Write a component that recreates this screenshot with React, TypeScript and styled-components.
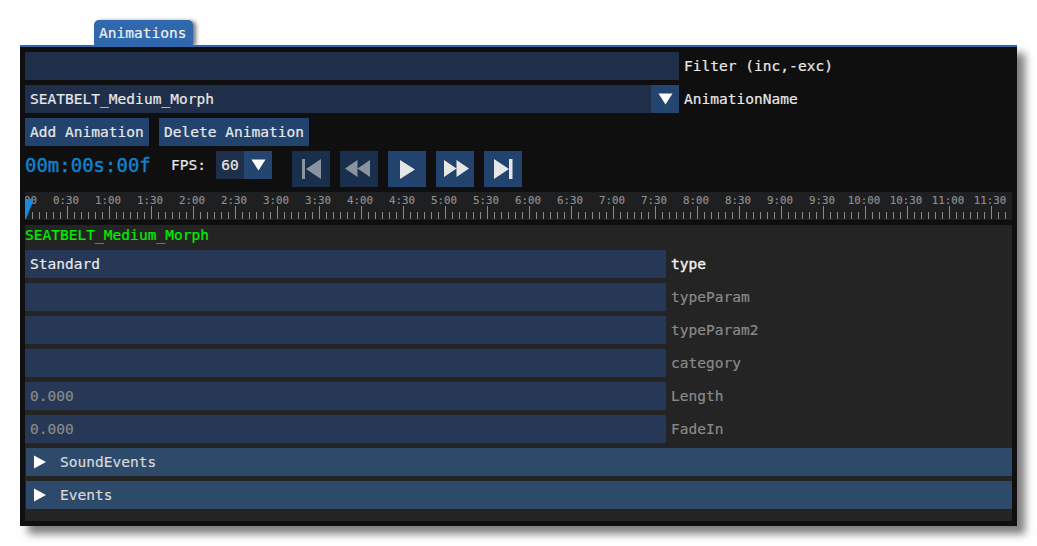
import styled, { createGlobalStyle } from 'styled-components';

const GlobalStyle = createGlobalStyle`
	html, body {
		margin: 0;
		background: #ffffff;
		font-family: "DejaVu Sans Mono", "Liberation Mono", monospace;
		font-size: 14.5px;
		letter-spacing: 0.03px;
		color: #e8e8e8;
		-webkit-text-stroke: 0.2px;
	}
`;

const Page = styled.div`
	width: 1037px;
	height: 546px;
	padding: 20px 0 0 20px;
	box-sizing: border-box;
	overflow: hidden;
`;

const TabBar = styled.div`
	display: flex;
	padding-left: 74px;
`;

const Tab = styled.div`
	width: 99px;
	height: 25px;
	box-sizing: border-box;
	padding: 5px 0 0 5px;
	background: #2f68ad;
	border-radius: 5px 5px 0 0;
	box-shadow: 3px 1px 4px rgba(0, 0, 0, 0.55);
	line-height: 17px;
	color: #f0f0f0;
`;

const Window = styled.div`
	position: relative;
	width: 997px;
	height: 481px;
	box-sizing: border-box;
	border-top: 2px solid #2f68ad;
	padding: 5px;
	background: #0f0f0f;
	box-shadow: 8px 8px 8px rgba(0, 0, 0, 0.5);
	display: flex;
	flex-direction: column;
	gap: 5px;
`;

const Row = styled.div`
	display: flex;
	align-items: center;
	gap: 5px;
	height: 28px;
`;

const Input = styled.div`
	width: 654px;
	height: 28px;
	box-sizing: border-box;
	padding-left: 5px;
	line-height: 28px;
	background: #1f2f4a;
`;

const Select = styled(Input)`
	display: flex;
	justify-content: space-between;
	padding-right: 0;
`;

const ArrowBox = styled.div`
	width: 28px;
	height: 28px;
	display: flex;
	align-items: center;
	justify-content: center;
	background: #23456f;
`;

const Label = styled.span`
	line-height: 28px;
`;

const Buttons = styled(Row)`
	gap: 10px;
`;

const Button = styled.div`
	height: 28px;
	box-sizing: border-box;
	padding: 0 5px;
	line-height: 28px;
	background: #23436f;
`;

const TimeRow = styled.div`
	display: flex;
	align-items: flex-start;
	height: 36px;
`;

const Time = styled.div`
	width: 146px;
	line-height: 28px;
	font-size: 18.95px;
	-webkit-text-stroke: 0.4px;
	color: #0f82d0;
`;

const FpsLabel = styled.div`
	width: 45px;
	line-height: 28px;
`;

const FpsSelect = styled.div`
	display: flex;
	width: 56px;
	height: 28px;
	background: #1f2f4a;
`;

const FpsValue = styled.div`
	width: 28px;
	text-align: center;
	line-height: 28px;
`;

const Transport = styled.div`
	display: flex;
	gap: 10px;
	margin-left: 20px;
`;

const TransportButton = styled.div<{ $disabled?: boolean }>`
	width: 38px;
	height: 36px;
	background: ${(props) => (props.$disabled ? '#1a2f4b' : '#23436f')};

	svg {
		display: block;
		opacity: ${(props) => (props.$disabled ? 0.55 : 1)};
	}
`;

const Timeline = styled.div`
	position: relative;
	height: 28px;
	background: #1e1f20;
	overflow: hidden;
`;

const TimeLabels = styled.div`
	display: flex;
	margin-left: -22px;
	padding-top: 1px;
	font-size: 10.8px;
	line-height: 15px;
	color: #8c8c8c;
`;

const TimeLabel = styled.span`
	flex: 0 0 42px;
	text-align: center;
`;

const Ruler = styled.svg`
	position: absolute;
	left: 0;
	bottom: 0;
`;

const Marker = styled.svg`
	position: absolute;
	left: 0;
	top: 7px;
`;

const Panel = styled.div`
	flex: 1;
	background: #242424;
	display: flex;
	flex-direction: column;
	gap: 5px;
`;

const PanelTitle = styled.div`
	height: 20px;
	line-height: 21px;
	color: #00f000;
`;

const Field = styled.div`
	display: flex;
	align-items: center;
	gap: 5px;
	height: 28px;
`;

const FieldValue = styled.div<{ $dim?: boolean }>`
	width: 641px;
	height: 28px;
	box-sizing: border-box;
	padding-left: 5px;
	line-height: 28px;
	background: #263855;
	color: ${(props) => (props.$dim ? '#8a8a8a' : '#e8e8e8')};
`;

const FieldLabel = styled.span<{ $active?: boolean }>`
	color: ${(props) => (props.$active ? '#f0f0f0' : '#8a8a8a')};
	-webkit-text-stroke: ${(props) => (props.$active ? '0.4px' : '0.2px')};
`;

const Section = styled.div`
	display: flex;
	align-items: center;
	height: 28px;
	margin-left: 1px;
	padding-left: 8px;
	background: #2d4a6b;
	color: #d8d8d8;
`;

const SectionName = styled.span`
	margin-left: 14px;
`;

const DownArrow = () => (
	<svg width="15" height="12" viewBox="0 0 15 12">
		<path d="M0.5 0.5 H14.5 L7.5 11.5 Z" fill="#ffffff" />
	</svg>
);

const RightArrow = () => (
	<svg width="12" height="14" viewBox="0 0 12 14" style={{ flexShrink: 0 }}>
		<path d="M0 0.5 L12 7 L0 13.5 Z" fill="#ffffff" />
	</svg>
);

const icons: { d: string; disabled?: boolean }[] = [
	{ d: 'M10 8 H13 V28 H10 Z M29 8 V28 L14 18 Z', disabled: true },
	{ d: 'M17.5 9 V26 L5 17.5 Z M30 9 V26 L17.5 17.5 Z', disabled: true },
	{ d: 'M12 9 L27 18.5 L12 28 Z' },
	{ d: 'M8 9 L20.5 17.5 L8 26 Z M20.5 9 L33 17.5 L20.5 26 Z' },
	{ d: 'M10 8 L25 18 L10 28 Z M25 8 H28.5 V28 H25 Z' }
];

const timeLabels: string[] = [];
for (let i = 0; i < 24; i++) {
	timeLabels.push(`${Math.floor(i / 2)}:${i % 2 ? '30' : '00'}`);
}

const ticks = Array.from({ length: 141 }, (_, i) => i * 7);

const fields = [
	{ name: 'type', value: 'Standard', active: true },
	{ name: 'typeParam', value: '' },
	{ name: 'typeParam2', value: '' },
	{ name: 'category', value: '' },
	{ name: 'Length', value: '0.000', dim: true },
	{ name: 'FadeIn', value: '0.000', dim: true }
];

const App = () => {
	return (
		<Page>
			<GlobalStyle />
			<TabBar>
				<Tab>Animations</Tab>
			</TabBar>
			<Window>
				<Row>
					<Input />
					<Label>Filter (inc,-exc)</Label>
				</Row>
				<Row>
					<Select>
						SEATBELT_Medium_Morph
						<ArrowBox>
							<DownArrow />
						</ArrowBox>
					</Select>
					<Label>AnimationName</Label>
				</Row>
				<Buttons>
					<Button>Add Animation</Button>
					<Button>Delete Animation</Button>
				</Buttons>
				<TimeRow>
					<Time>00m:00s:00f</Time>
					<FpsLabel>FPS:</FpsLabel>
					<FpsSelect>
						<FpsValue>60</FpsValue>
						<ArrowBox>
							<DownArrow />
						</ArrowBox>
					</FpsSelect>
					<Transport>
						{icons.map((icon) => (
							<TransportButton key={icon.d} $disabled={icon.disabled}>
								<svg width="38" height="36" viewBox="0 0 38 36">
									<path d={icon.d} fill="#e6e6e6" />
								</svg>
							</TransportButton>
						))}
					</Transport>
				</TimeRow>
				<Timeline>
					<TimeLabels>
						{timeLabels.map((label) => (
							<TimeLabel key={label}>{label}</TimeLabel>
						))}
					</TimeLabels>
					<Ruler width="987" height="14" viewBox="0 0 987 14">
						{ticks.map((x, i) => (
							<rect
								key={x}
								x={x}
								y={i % 6 === 0 ? 0 : 6}
								width="1"
								height={i % 6 === 0 ? 13 : 7}
								fill="#8a8a8a"
							/>
						))}
					</Ruler>
					<Marker width="10" height="21" viewBox="0 0 10 21">
						<path d="M0 0 H9 L1 20 H0 Z" fill="#1a8ae0" />
					</Marker>
				</Timeline>
				<Panel>
					<PanelTitle>SEATBELT_Medium_Morph</PanelTitle>
					{fields.map((field) => (
						<Field key={field.name}>
							<FieldValue $dim={field.dim}>{field.value}</FieldValue>
							<FieldLabel $active={field.active}>{field.name}</FieldLabel>
						</Field>
					))}
					<Section>
						<RightArrow />
						<SectionName>SoundEvents</SectionName>
					</Section>
					<Section>
						<RightArrow />
						<SectionName>Events</SectionName>
					</Section>
				</Panel>
			</Window>
		</Page>
	);
};

export default App;
